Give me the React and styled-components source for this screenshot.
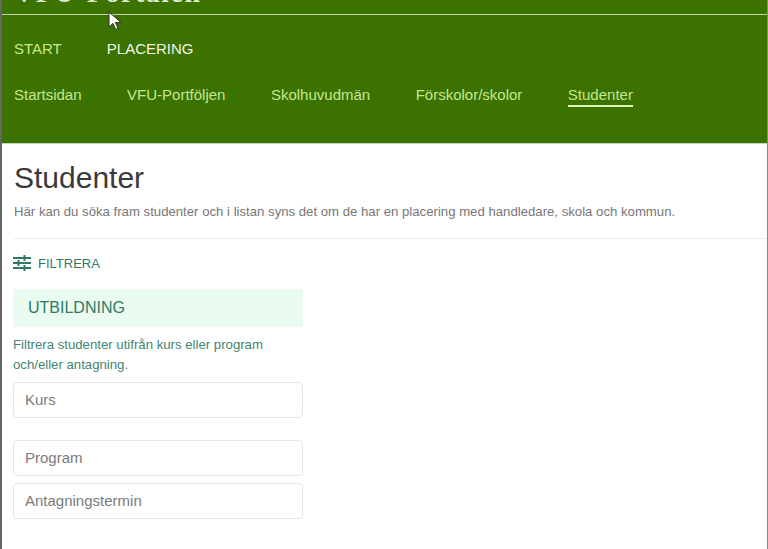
import React from "react";
import styled, { createGlobalStyle } from "styled-components";

const GlobalStyle = createGlobalStyle`
  html, body {
    margin: 0;
    padding: 0;
    background: #fff;
  }
  body {
    font-family: "Liberation Sans", Arial, sans-serif;
  }
`;

const mainLinks = ["Startsidan", "VFU-Portföljen", "Skolhuvudmän", "Förskolor/skolor", "Studenter"];

const App = () => (
  <Page>
    <GlobalStyle />
    <Header>
      <TitleBar>
        <Logo>VFU-Portalen</Logo>
      </TitleBar>
      <TopNav>
        <TopLink>START</TopLink>
        <TopLink $active>PLACERING</TopLink>
      </TopNav>
      <SubNav>
        {mainLinks.map((link) => (
          <SubLink key={link} $active={link === "Studenter"}>
            {link}
          </SubLink>
        ))}
      </SubNav>
      <Pointer width="14" height="20" viewBox="0 0 14 20">
        <path d="M1 1v15l4-3.600 2.600 6 2.400-1-2.600-5.900H13z" fill="#fff" stroke="#333" strokeWidth="1" />
      </Pointer>
    </Header>
    <Intro>
      <Title>Studenter</Title>
      <Lead>
        Här kan du söka fram studenter och i listan syns det om de har en placering med handledare, skola och kommun.
      </Lead>
    </Intro>
    <Content>
      <FilterToggle>
        <svg width="18" height="16" viewBox="0 0 18 16" fill="none" stroke="#2f7a64">
          <path d="M0 3h18M0 8h18M0 13h18" strokeWidth="2" />
          <path d="M11.500 0v6M5.500 5v6M11.500 10v6" strokeWidth="2" />
        </svg>
        FILTRERA
      </FilterToggle>
      <FilterPanel>
        <PanelHeading>UTBILDNING</PanelHeading>
        <PanelText>Filtrera studenter utifrån kurs eller program och/eller antagning.</PanelText>
        <KursField placeholder="Kurs" />
        <Field placeholder="Program" />
        <Field placeholder="Antagningstermin" />
      </FilterPanel>
    </Content>
  </Page>
);

export default App;

const Page = styled.div`
  width: 768px;
  height: 549px;
  overflow: hidden;
  box-sizing: border-box;
  border-left: 2px solid #666;
  border-right: 1px solid #888;
  background: #fff;
`;

const Header = styled.header`
  position: relative;
  height: 144px;
  background: #3b7200;
  border-bottom: 1px solid #c9d6b8;
  box-sizing: border-box;
`;

const TitleBar = styled.div`
  height: 15px;
  overflow: hidden;
  border-bottom: 1px solid #c4d4ae;
  box-sizing: border-box;
`;

const Logo = styled.div`
  margin: -22px 0 0 12px;
  font-family: "Liberation Serif", serif;
  font-size: 28px;
  font-weight: 700;
  letter-spacing: 1.500px;
  line-height: 30px;
  color: #dfe9d0;
`;

const TopNav = styled.nav`
  display: flex;
  gap: 45px;
  padding: 26px 0 0 12px;
`;

const TopLink = styled.a`
  font-size: 15px;
  line-height: 16px;
  color: ${(p) => (p.$active ? "#f1f8e6" : "#c5e88f")};
`;

const SubNav = styled.nav`
  display: flex;
  gap: 45.500px;
  padding: 30px 0 0 12px;
`;

const SubLink = styled.a`
  font-size: 15px;
  line-height: 16px;
  padding-bottom: 2px;
  color: #c5e88f;
  border-bottom: 2px solid ${(p) => (p.$active ? "#dcf2b8" : "transparent")};
`;

const Pointer = styled.svg`
  position: absolute;
  left: 106px;
  top: 11px;
`;

const Intro = styled.section`
  margin-left: 12px;
  padding-top: 17px;
  height: 95px;
  box-sizing: border-box;
  border-bottom: 1px solid #ececec;
`;

const Title = styled.h1`
  margin: 0;
  font-size: 30px;
  font-weight: 400;
  line-height: 34px;
  color: #3a3a3a;
`;

const Lead = styled.p`
  margin: 9px 0 0;
  font-size: 13.180px;
  line-height: 16px;
  color: #777;
`;

const Content = styled.main`
  padding: 15px 0 0 11px;
`;

const FilterToggle = styled.div`
  display: flex;
  align-items: center;
  gap: 7px;
  height: 18px;
  font-size: 13px;
  color: #2f7a64;
`;

const FilterPanel = styled.div`
  width: 290px;
  margin-top: 17px;
`;

const PanelHeading = styled.div`
  height: 38px;
  padding-left: 15px;
  background: #eafbef;
  font-size: 16px;
  line-height: 38px;
  color: #2f7a64;
`;

const PanelText = styled.p`
  margin: 8px 0 7px;
  width: 270px;
  font-size: 13.200px;
  line-height: 20px;
  color: #3f8572;
`;

const Field = styled.input`
  display: block;
  width: 100%;
  height: 36px;
  margin-top: 7px;
  padding: 0 11px 2px;
  box-sizing: border-box;
  border: 1px solid #e3e6ea;
  border-radius: 4px;
  font-family: inherit;
  font-size: 15px;
  color: #555;
  &::placeholder {
    color: #7b7b7b;
    opacity: 1;
  }
`;

const KursField = styled(Field)`
  margin: 0 0 22px;
`;
